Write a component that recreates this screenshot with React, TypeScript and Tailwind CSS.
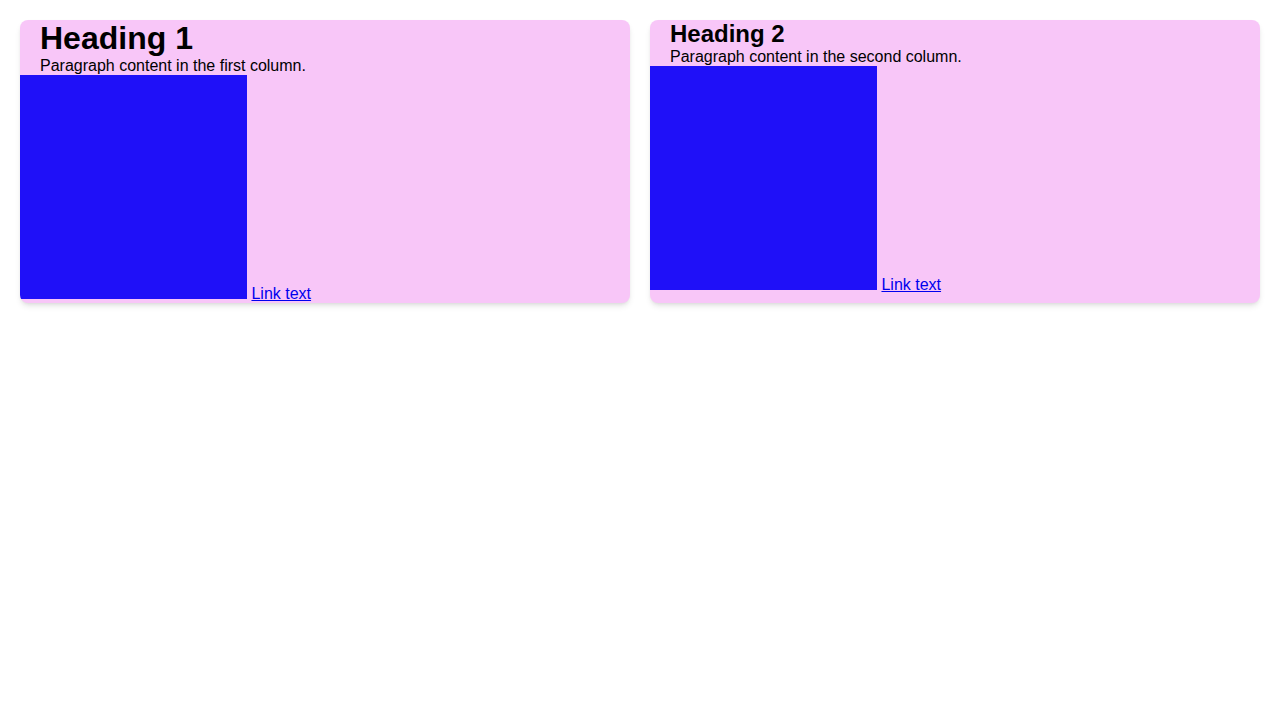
import React from "react";

function Card({ title, text, big }: { title: string; text: string; big: boolean }) {
  return (
    <div className="bg-[#f8c6f8] rounded-lg shadow-md overflow-hidden leading-[normal]">
      <h2 className={(big ? "text-[32px]" : "text-[24px]") + " font-bold px-5 leading-[normal] text-black"}>{title}</h2>
      <p className="px-5 text-[16px] text-black leading-[normal]">{text}</p>
      <div className="text-[16px] leading-[normal]">
        <span className="inline-block w-[227px] h-[224px] bg-[#1f10f8] align-baseline"></span>{" "}
        <a href="#" className="text-[#0000ee] underline">Link text</a>
      </div>
    </div>
  );
}

export default function App() {
  return (
    <div className="min-h-[720px] bg-white p-5 font-['Liberation_Sans',Arial,sans-serif]">
      <div className="grid grid-cols-2 gap-5">
        <Card title="Heading 1" text="Paragraph content in the first column." big={true} />
        <Card title="Heading 2" text="Paragraph content in the second column." big={false} />
      </div>
    </div>
  );
}
